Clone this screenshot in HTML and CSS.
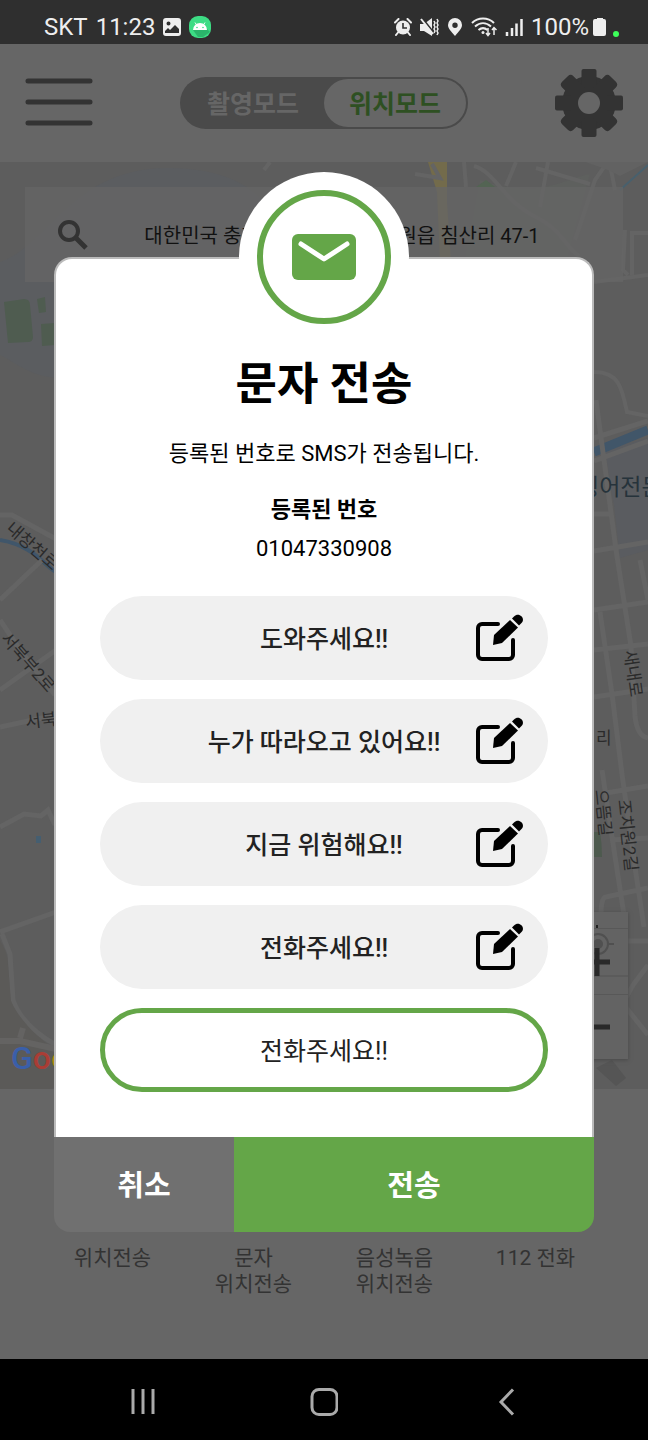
FILE: index.html
```html
<!DOCTYPE html>
<html lang="ko">
<head>
<meta charset="utf-8">
<meta name="viewport" content="width=device-width, initial-scale=1">
<title>문자 전송</title>
<link rel="stylesheet" href="styles.css">
</head>
<body>
<svg class="defs" aria-hidden="true">
  <symbol id="edit" viewBox="0 0 48 48">
    <path d="M22 10H6a4 4 0 0 0-4 4v27a4 4 0 0 0 4 4h27a4 4 0 0 0 4-4V26" fill="none" stroke="#000" stroke-width="4" stroke-linecap="round"/>
    <path d="M34 6l8 7.500L26 29l-9 2 1-10z" fill="#000"/>
    <path d="M36 4.500l2-2c5-5 12 2 7.500 6.500L43 11.500z" fill="#000"/>
  </symbol>
</svg>
<div class="screen">
  <header class="status">
    <div class="status-group">
      <span>SKT</span>
      <span>11:23</span>
      <svg width="18" height="18" viewBox="0 0 18 18"><path fill="#eee" fill-rule="evenodd" d="M3 0h12a3 3 0 0 1 3 3v12a3 3 0 0 1-3 3H3a3 3 0 0 1-3-3V3a3 3 0 0 1 3-3zM2 13v2h14v-4l-4-4-5 5-2-2zM5.500 3.500a2 2 0 1 0 0 4 2 2 0 0 0 0-4z"/></svg>
      <svg width="22" height="22" viewBox="0 0 22 22"><rect width="22" height="22" rx="9" fill="#3ddc84"/><path d="M4 14l5 7h5l7-5-3-3z" fill="#2bb56b"/><path d="M4 14a7 7 0 0 1 14 0z" fill="#fff"/><path d="M6 6.500l2 3M16 6.500l-2 3" stroke="#fff"/><circle cx="8" cy="11.500" r=".8" fill="#3ddc84"/><circle cx="14" cy="11.500" r=".8" fill="#3ddc84"/></svg>
    </div>
    <div class="status-group">
      <svg width="18" height="18" viewBox="0 0 18 18"><circle cx="9" cy="9.500" r="7" fill="#eee"/><path d="M1 4.500L4.500 1M17 4.500L13.500 1M4 14.500L2 17M14 14.500l2 2.500" stroke="#eee" stroke-width="2" stroke-linecap="round"/><path d="M9 5v5h4" fill="none" stroke="#2f2f2f" stroke-width="1.600"/></svg>
      <svg width="19" height="18" viewBox="0 0 19 18"><path d="M0 6h4l8-6v18l-8-5H0z" fill="#eee"/><path d="M2 0l12 15" stroke="#2f2f2f" stroke-width="2"/><path d="M1 1l12 15" stroke="#eee" stroke-width="2"/><path d="M14 3l1 2-1 2 1 2-1 2 1 2-1 2M17 1l1 2-1 2 1 2-1 2 1 2-1 2 1 2-1 2" fill="none" stroke="#eee" stroke-width="1.500"/></svg>
      <svg width="16" height="18" viewBox="0 0 16 18"><path fill="#eee" fill-rule="evenodd" d="M8 18C4 13 1 10.500 1 7a7 7 0 0 1 14 0c0 3.500-3 6-7 11zM8 4.500a2.700 2.700 0 1 0 0 5.400 2.700 2.700 0 0 0 0-5.400z"/></svg>
      <svg width="26" height="20" viewBox="0 0 26 20"><path d="M1 6c6-6 16-6 22 0M4 9.500c5-4.500 11-4.500 16 0M7.500 13c3-2.500 6-2.500 9 0" fill="none" stroke="#eee" stroke-width="2"/><circle cx="12" cy="15.500" r="1.500" fill="#eee"/><path d="M17 11v7M15 16l2 2.500 2-2.500M23 18v-7M21 13l2-2.500 2.500 2.500" fill="none" stroke="#eee" stroke-width="1.500"/></svg>
      <svg width="18" height="18" viewBox="0 0 18 18"><path d="M2 14v4M7 10v8M11.500 5.500V18M16.500 1v17" stroke="#eee" stroke-width="2.500"/></svg>
      <span>100%</span>
      <svg class="battery" width="27" height="20" viewBox="0 0 27 20"><path d="M4 2V1h6v1h1a2 2 0 0 1 2 2v13a2 2 0 0 1-2 2H2a2 2 0 0 1-2-2V4a2 2 0 0 1 2-2z" fill="#eee"/><circle cx="23" cy="17" r="3" fill="#3dff5a"/></svg>
    </div>
  </header>

  <main class="app">
    <div class="topbar">
      <button class="icon-btn" type="button" aria-label="메뉴">
        <svg width="68" height="50" viewBox="0 0 68 50"><path d="M3 3h62M3 24h62M3 45h62" stroke="#333" stroke-width="5" stroke-linecap="round"/></svg>
      </button>
      <div class="modes">
        <button class="mode" type="button">촬영모드</button>
        <button class="mode mode-on" type="button">위치모드</button>
      </div>
      <button class="icon-btn" type="button" aria-label="설정">
        <svg width="68" height="68" viewBox="-34 -34 68 68">
          <g fill="#333"><circle r="27"/>
          <rect x="-7.500" y="-34" width="15" height="68" rx="2"/><rect x="-34" y="-7.500" width="68" height="15" rx="2"/>
          <g transform="rotate(45)"><rect x="-8" y="-34" width="16" height="68" rx="4"/><rect x="-34" y="-8" width="68" height="16" rx="4"/></g></g>
          <circle r="11" fill="#666"/>
        </svg>
      </button>
    </div>

    <section class="map" aria-label="지도">
      <svg class="map-art" viewBox="0 162 648 927" preserveAspectRatio="xMidYMin slice">
        <rect y="162" width="648" height="927" fill="#5d5d5d"/>
        <path d="M0 262C50 245 70 170 165 168c80 0 120 30 140 130L80 375c-40 10-60-10-80-20z" fill="#5b5d60"/>
        <path d="M480 180c60 20 80 0 110-6l-30 110H460z" fill="#5e605e"/>
        <path d="M4 302l20-3q6 0 6 6l3 32q0 5-5 5l-20 1zM37 299l8-2 1 15-7 1zM41 324l14-1v22l-13 1z" fill="#4f5c50"/>
        <path d="M476 187l10-7 9 7z" fill="#536453"/>
        <path d="M428 162h19v40l4 60h-11l-3-70z" fill="#736b4b"/>
        <g fill="none" stroke="#646464" stroke-width="4">
          <path d="M270 162l-6 8M415 174l25 4-8-14M464 162l2 25M474 166c20 5 30 35 60 50s30 30 45 40M516 162l-10 24M536 168l54 16M575 240l20-60 14-20 6 30M548 162l-8 45M625 230l-2 40 5 5M632 275v-42h16"/>
          <path d="M594 282l54-7M594 372c25 0 28 16 33 40l21 4"/>
        </g>
        <path d="M585 162h63l-28 14c-10-6-20-9-35-14z" fill="#626262"/>
        <path d="M620 190l28-25" stroke="#48606d" stroke-width="2"/>
        <path d="M605 450l43-12v60l-34 7zM614 505l34-10v55l-28 8z" fill="#5a5c60"/>
        <path d="M594 452l54-22" stroke="#415669" stroke-width="9"/>
        <g fill="none" stroke="#646464" stroke-width="5">
          <path d="M596 400l20 150 15 96 4 70q2 20 13 22M594 438l54-17M594 461l54-20M594 514h16M594 551l54-9M594 610l54-8M594 650l54-6M594 697l54-8M600 612l12 82 10 80 14 100 8 53M640 560l8 40M602 770l12 80 10 65M606 793l42-7M610 840l38-2M601 915q0-18 5-18l42-9M628 941h20M648 965l-15 20-14 25M620 1000l28 35"/>
        </g>
        <path d="M594 832h6q2 12 2 25h-8z" fill="#4d5a4e"/>
        <path d="M596 1068l16-8 14 18-10 8z" fill="#555"/>
        <path d="M0 540c35 6 43 25 56 32" fill="none" stroke="#40566a" stroke-width="4"/>
        <g fill="none" stroke="#646464" stroke-width="5">
          <path d="M0 515l12 0 44 24M0 600l42-40M0 690l56-40M0 727l56-12M0 620l20 30 35 45M0 827l24-13 17 2 7-6 7 15M0 932l56-20M2 934l8 20 3 46c7 20 25 35 43 45M0 1039h22l34 12"/>
        </g>
        <path d="M0 940c5 10 8 15 8 25l3 36c9 20 28 38 45 49v33q-1 5-5 6H0z" fill="#5b5a58"/>
        <path d="M0 1041h20l36 8M20 1038l3-10" fill="none" stroke="#646362" stroke-width="6"/>
        <path d="M36 836h5v7h-5z" fill="#455e70"/>
        <g class="labels">
          <text transform="translate(5 530) rotate(41)">내창천로</text>
          <text transform="translate(0 639) rotate(49)">서북부2로</text>
          <text transform="translate(26 728) rotate(-6)">서북</text>
          <text x="596" y="744">리</text>
          <text transform="translate(624 651) rotate(82)">새내로</text>
          <text transform="translate(595 790) rotate(84)">으뜸길</text>
          <text transform="translate(618 800) rotate(84)">조치원2길</text>
          <text class="place" x="578" y="495">링어전문</text>
        </g>
        <text class="logo" x="11" y="1069"><tspan fill="#3a5fa9">G</tspan><tspan fill="#a93d35">o</tspan><tspan fill="#b08a12">o</tspan></text>
      </svg>
      <form class="search">
        <button class="icon-btn" type="button" aria-label="검색">
          <svg width="32" height="32" viewBox="0 0 32 32"><circle cx="12" cy="12" r="9" fill="none" stroke="#333" stroke-width="4"/><path d="M18 18l11 11" stroke="#333" stroke-width="5"/></svg>
        </button>
        <input class="address" type="text" aria-label="주소" value="대한민국 충청남도 연기군 조치원읍 침산리 47-1">
      </form>
      <div class="zoom">
        <button class="zoom-btn" type="button" aria-label="현재 위치"><svg width="66" height="16" viewBox="0 0 66 16"><path d="M35 13v3" stroke="#222" stroke-width="2"/></svg></button>
        <button class="zoom-btn" type="button" aria-label="확대"><svg width="66" height="65" viewBox="0 0 66 65"><circle cx="36" cy="15" r="10" fill="none" stroke="#505050" stroke-width="2"/><circle cx="36" cy="15" r="5" fill="#505050"/><path d="M45 15h7" stroke="#505050" stroke-width="2"/><path d="M0 47h66" stroke="#5b5b5b" stroke-width="2"/><path d="M19 33h29M35 19v28" stroke="#292929" stroke-width="5"/></svg></button>
        <button class="zoom-btn" type="button" aria-label="축소"><svg width="66" height="64" viewBox="0 0 66 64"><path d="M19 32h29" stroke="#292929" stroke-width="5"/></svg></button>
      </div>
    </section>

    <nav class="tabs">
      <a class="tab" href="#location">위치전송</a>
      <a class="tab" href="#sms">문자<br>위치전송</a>
      <a class="tab" href="#voice">음성녹음<br>위치전송</a>
      <a class="tab" href="#call">112 전화</a>
    </nav>

    <div class="overlay">
      <div class="dialog" role="dialog" aria-labelledby="dialog-title">
        <div class="badge"><div class="ring">
          <svg width="64" height="46" viewBox="0 0 64 46"><rect width="64" height="46" rx="6" fill="#64a648"/><path d="M9 10l23 15 23-15" fill="none" stroke="#fff" stroke-width="5" stroke-linecap="round" stroke-linejoin="round"/></svg>
        </div></div>
        <div class="card">
          <h1 class="title" id="dialog-title">문자 전송</h1>
          <p class="desc">등록된 번호로 SMS가 전송됩니다.</p>
          <h2 class="subtitle">등록된 번호</h2>
          <p class="number">01047330908</p>
          <div class="messages">
            <div class="pill"><button class="message" type="button">도와주세요!!</button><button class="icon-btn" type="button" aria-label="수정"><svg width="48" height="48"><use href="#edit"/></svg></button></div>
            <div class="pill"><button class="message" type="button">누가 따라오고 있어요!!</button><button class="icon-btn" type="button" aria-label="수정"><svg width="48" height="48"><use href="#edit"/></svg></button></div>
            <div class="pill"><button class="message" type="button">지금 위험해요!!</button><button class="icon-btn" type="button" aria-label="수정"><svg width="48" height="48"><use href="#edit"/></svg></button></div>
            <div class="pill"><button class="message" type="button">전화주세요!!</button><button class="icon-btn" type="button" aria-label="수정"><svg width="48" height="48"><use href="#edit"/></svg></button></div>
            <input class="custom" type="text" aria-label="보낼 메시지" value="전화주세요!!">
          </div>
        </div>
        <div class="actions">
          <button class="action cancel" type="button">취소</button>
          <button class="action send" type="button">전송</button>
        </div>
      </div>
    </div>
  </main>

  <nav class="sysnav">
    <button class="icon-btn" type="button" aria-label="최근 앱"><svg width="28" height="28" viewBox="0 0 28 28"><path d="M4 1v25M14 1v25M24 1v25" stroke="#aaa" stroke-width="3"/></svg></button>
    <button class="icon-btn" type="button" aria-label="홈"><svg width="28" height="28" viewBox="0 0 28 28"><rect x="2" y="1.500" width="25" height="25" rx="7" fill="none" stroke="#aaa" stroke-width="3"/></svg></button>
    <button class="icon-btn" type="button" aria-label="뒤로"><svg width="28" height="28" viewBox="0 0 28 28"><path d="M22 1.500L10 14l12 12.500" fill="none" stroke="#aaa" stroke-width="3"/></svg></button>
  </nav>
</div>
</body>
</html>
```
FILE: styles.css
```css
* { box-sizing: border-box; }

body {
  margin: 0;
  font-family: Roboto, "Noto Sans CJK KR", sans-serif;
  color: #000;
}

button, input {
  font-family: inherit;
  border: 0;
  padding: 0;
  margin: 0;
  background: none;
}

svg { display: block; }
.defs { position: absolute; width: 0; height: 0; }
.icon-btn { display: block; line-height: 0; }

.screen {
  min-height: 100vh;
  display: flex;
  flex-direction: column;
  background: #666;
}

.status {
  height: 44px;
  padding: 10px 28px 0 44px;
  display: flex;
  justify-content: space-between;
  align-items: center;
  background: #2f2f2f;
  color: #eee;
  font-size: 24px;
  line-height: 32px;
}
.status-group { display: flex; align-items: center; gap: 8px; }
.battery { margin-left: -4px; }

.app {
  flex: 1;
  position: relative;
  display: flex;
  flex-direction: column;
}

.topbar {
  height: 118px;
  padding: 0 25px;
  display: flex;
  align-items: center;
  justify-content: space-between;
}

.modes {
  display: flex;
  width: 288px;
  height: 52px;
  padding: 2px;
  border-radius: 26px;
  background: #4a4a4a;
}
.mode {
  flex: 1;
  padding-bottom: 2px;
  border-radius: 24px;
  color: #666;
  font-size: 25px;
  font-weight: 700;
}
.mode-on { background: #666; color: #2e5022; }

.map {
  flex: 1;
  position: relative;
  overflow: hidden;
}
.map-art { position: absolute; width: 100%; height: 100%; }
.labels { font-size: 17px; fill: #2a2a2a; }
.place { font-size: 23px; fill: #26333b; }
.logo { font-size: 32px; font-weight: 500; }

.search {
  position: relative;
  margin: 25px 25px 0;
  height: 95px;
  padding: 0 28px 0 32px;
  display: flex;
  align-items: center;
  background: rgba(102, 102, 102, 0.75);
}
.address {
  flex: 1;
  min-width: 0;
  font-size: 20px;
  text-align: center;
  color: #111;
}

.zoom { position: absolute; right: 20px; bottom: 30px; box-shadow: 0 1px 4px #484848; }
.zoom-btn { display: block; background: #636363; }
.zoom-btn + .zoom-btn { border-top: 1px solid #585858; }

.tabs {
  padding: 156px 42px 62px;
  display: grid;
  grid-template-columns: repeat(4, 1fr);
}
.tab {
  color: #333;
  font-size: 21px;
  line-height: 26px;
  text-align: center;
  text-decoration: none;
}

.overlay {
  position: absolute;
  inset: 0;
  padding: 0 54px;
  display: flex;
  align-items: center;
}
.dialog { width: 100%; display: flex; flex-direction: column; }

.badge {
  position: relative;
  align-self: center;
  width: 170px;
  height: 170px;
  margin-bottom: -85px;
  display: grid;
  place-items: center;
  border-radius: 50%;
  background: #fff;
}
.ring {
  width: 134px;
  height: 134px;
  display: grid;
  place-items: center;
  border: 6px solid #64a648;
  border-radius: 50%;
}

.card {
  padding: 96px 44px 45px;
  background: #fff;
  border: 2px solid #bbb;
  border-bottom: 0;
  border-radius: 18px 18px 0 0;
  text-align: center;
}
.title { margin: 0; font-size: 45px; line-height: 60px; font-weight: 700; }
.desc { margin: 23px 0 0; font-size: 22px; line-height: 32px; }
.subtitle { margin: 24px 0 0; font-size: 22px; line-height: 32px; font-weight: 700; }
.number { margin: 7px 0 0; font-size: 22px; line-height: 32px; }

.messages { margin-top: 31px; display: grid; gap: 19px; }
.pill {
  height: 84px;
  padding: 0 24px;
  display: grid;
  grid-template-columns: 1fr 48px;
  align-items: center;
  border-radius: 42px;
  background: #f0f0f0;
}
.message {
  height: 100%;
  padding: 0 0 2px 48px;
  color: #222;
  font-size: 25px;
  font-weight: 500;
}
.custom {
  width: 100%;
  height: 84px;
  padding-bottom: 2px;
  border: 5px solid #64a648;
  border-radius: 42px;
  text-align: center;
  color: #222;
  font-size: 25px;
}

.actions {
  display: grid;
  grid-template-columns: 1fr 2fr;
  overflow: hidden;
  border-radius: 0 0 16px 16px;
}
.action {
  height: 95px;
  padding-bottom: 2px;
  color: #fff;
  font-size: 29px;
  font-weight: 700;
}
.cancel { background: #707070; }
.send { background: #64a648; }

.sysnav {
  height: 81px;
  padding: 4px 52px 0;
  display: grid;
  grid-template-columns: repeat(3, 1fr);
  place-items: center;
  background: #000;
}
```
